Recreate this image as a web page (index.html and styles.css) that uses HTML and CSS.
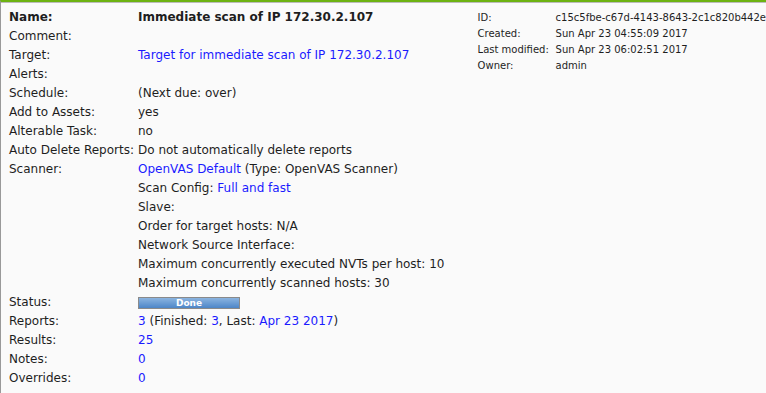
FILE: index.html
```html
<!DOCTYPE html>
<html lang="en">
<head>
  <meta charset="UTF-8" />
  <title>Task Details</title>
  <link rel="stylesheet" href="styles.css">
</head>
<body>
  <div class="section-box">
    <table class="details">
      <tr><td><b>Name:</b></td><td><b>Immediate scan of IP 172.30.2.107</b></td></tr>
      <tr><td>Comment:</td><td></td></tr>
      <tr><td>Target:</td><td><a href="#">Target for immediate scan of IP 172.30.2.107</a></td></tr>
      <tr><td>Alerts:</td><td></td></tr>
      <tr><td>Schedule:</td><td>(Next due: over)</td></tr>
      <tr><td>Add to Assets:</td><td>yes</td></tr>
      <tr><td>Alterable Task:</td><td>no</td></tr>
      <tr><td>Auto Delete Reports:</td><td>Do not automatically delete reports</td></tr>
      <tr>
        <td>Scanner:</td>
        <td>
          <div><a href="#">OpenVAS Default</a> (Type: OpenVAS Scanner)</div>
          <div>Scan Config: <a href="#">Full and fast</a></div>
          <div>Slave:</div>
          <div>Order for target hosts: N/A</div>
          <div>Network Source Interface:</div>
          <div>Maximum concurrently executed NVTs per host: 10</div>
          <div>Maximum concurrently scanned hosts: 30</div>
        </td>
      </tr>
      <tr><td>Status:</td><td><div class="progress-bar"><span>Done</span></div></td></tr>
      <tr><td>Reports:</td><td><a href="#">3</a> (Finished: <a href="#">3</a>, Last: <a href="#">Apr 23 2017</a>)</td></tr>
      <tr><td>Results:</td><td><a href="#">25</a></td></tr>
      <tr><td>Notes:</td><td><a href="#">0</a></td></tr>
      <tr><td>Overrides:</td><td><a href="#">0</a></td></tr>
    </table>

    <table class="details-meta">
      <tr><td>ID:</td><td>c15c5fbe-c67d-4143-8643-2c1c820b442e</td></tr>
      <tr><td>Created:</td><td>Sun Apr 23 04:55:09 2017</td></tr>
      <tr><td>Last modified:</td><td>Sun Apr 23 06:02:51 2017</td></tr>
      <tr><td>Owner:</td><td>admin</td></tr>
    </table>
  </div>
</body>
</html>
```

FILE: styles.css
```css
* { box-sizing: border-box; }
body {
  margin: 0;
  background: #fff;
  color: #1e1e1e;
  font-family: "DejaVu Sans", Verdana, sans-serif;
  font-size: 12px;
}
a { color: #1a1aff; text-decoration: none; }
.section-box {
  display: flex;
  justify-content: space-between;
  align-items: flex-start;
  border-top: 2px solid #6db312;
  border-left: 1px solid #999;
  box-shadow: inset 0 1px 0 #bbb;
  background: #fafafa;
  padding: 6px 0 0 8px;
  height: 393px;
  overflow: hidden;
}
.details { border-collapse: collapse; }
.details td {
  padding: 0 4px 0 0;
  vertical-align: top;
  line-height: 19px;
  white-space: nowrap;
}
.details td:first-child { width: 127px; }
.details-meta {
  border-collapse: collapse;
  font-size: 10px;
  margin-top: 2px;
}
.details-meta td {
  padding: 0;
  line-height: 16px;
  white-space: nowrap;
}
.details-meta td:first-child { width: 78px; }
.progress-bar {
  width: 102px;
  height: 12px;
  margin: 4px 0 3px;
  border: 1px solid #8a8a8a;
  background: linear-gradient(#8bb4e0, #4d86c8);
  color: #fff;
  font-size: 9px;
  font-weight: bold;
  line-height: 10px;
  text-align: center;
}
```
